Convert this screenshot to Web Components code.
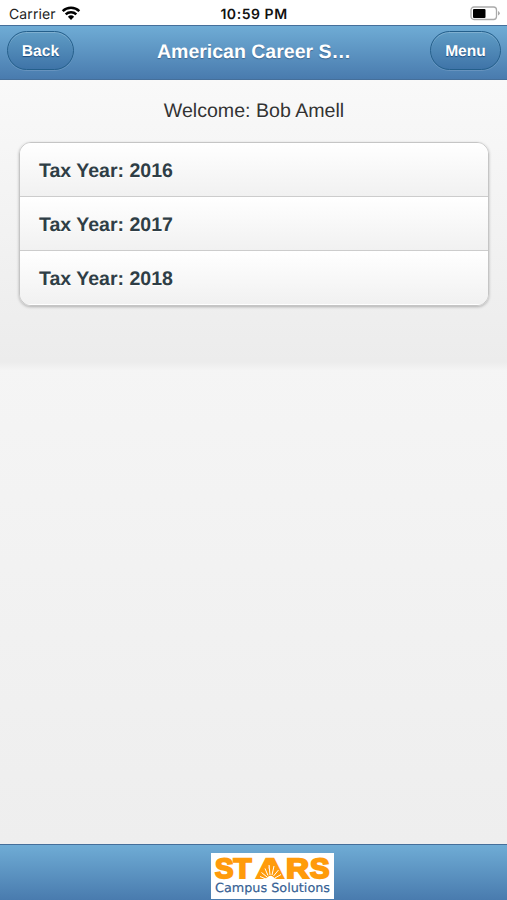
<!DOCTYPE html>
<html lang="en"><head><meta charset="utf-8"><title>Tax Years</title>
<style>html,body{margin:0;height:100%;overflow:hidden}body{font-family:"Liberation Sans",Arial,sans-serif;text-rendering:geometricPrecision}</style></head>
<body>
<app-screen>
  <status-bar slot="status"></status-bar>
  <title-bar slot="header">
    <pill-button slot="left" style="width:67px">Back</pill-button>
    American Career S…
    <pill-button slot="right" style="width:71px">Menu</pill-button>
  </title-bar>
  <welcome-line>Welcome: Bob Amell</welcome-line>
  <year-list>
    <year-row>Tax Year: 2016</year-row>
    <year-row>Tax Year: 2017</year-row>
    <year-row>Tax Year: 2018</year-row>
  </year-list>
  <brand-footer slot="footer"></brand-footer>
</app-screen>
<script>
const define = (name, html) => customElements.define(name, class extends HTMLElement {
  constructor() { super(); this.attachShadow({mode: 'open'}).innerHTML = html; }
});
define('app-screen', `<style>
:host{display:flex;flex-direction:column;height:900px;width:507px;background:#fff}
main{flex:1;background:linear-gradient(#f9f9f9 0,#eee 100%)}
.content{height:290px;box-sizing:border-box;padding:19px 18px 0 19px;background:linear-gradient(#f9f9f9,#ececec 282px,#f4f4f4 290px)}
</style><slot name="status"></slot><slot name="header"></slot><main><div class="content"><slot></slot></div></main><slot name="footer"></slot>`);
define('status-bar', `<style>
:host{display:grid;grid-template-columns:1fr auto 1fr;align-items:center;height:25px;padding:3px 6px 0 9px;box-sizing:border-box;font-family:Inter,"Liberation Sans",sans-serif;font-size:14px;color:#222}
.l{display:flex;align-items:center;gap:5px}.l span{letter-spacing:.1px}.l svg{margin-top:-2px}.t{font-weight:600;color:#111;font-size:14px;letter-spacing:.55px;margin-right:2px}.r{display:flex;justify-content:flex-end;margin-top:-1px}svg{display:block}
</style><div class="l"><span>Carrier</span><svg width="20" height="15" viewBox="0 0 20 15" fill="none" stroke="#000" stroke-width="2.5"><path d="M1.7 5.1C6.3.7 13.7.7 18.3 5.1M4.7 8.3C7.6 5.5 12.4 5.5 15.3 8.3"/><path d="M6.9 10.7Q10 7.9 13.1 10.7L10 14Z" fill="#000" stroke="none"/></svg></div>
<div class="t">10:59 PM</div>
<div class="r"><svg width="31" height="15" viewBox="0 0 31 15"><rect x="1" y="1" width="25.5" height="12.5" rx="3" fill="#fff" stroke="#aaa" stroke-width="1.3"/><rect x="3" y="3" width="12.5" height="9" rx="1" fill="#000"/><path d="M28 5q3.5 2.2 0 4.5z" fill="#aaa"/></svg></div>`);
define('title-bar', `<style>
:host{display:flex;align-items:center;justify-content:space-between;height:55px;box-sizing:border-box;padding:0 6px 4px 7px;border-top:1px solid #456f9a;border-bottom:1px solid #456f9a;background:linear-gradient(#6facd5,#497bae);color:#fff}
h1{margin:2px 0 0 4px;font-size:19.5px;line-height:24px;font-weight:700;text-shadow:0 1px 1px #3e6790;white-space:nowrap}
</style><slot name="left"></slot><h1><slot></slot></h1><slot name="right"></slot>`);
define('pill-button', `<style>
:host{display:flex;align-items:center;justify-content:center;height:39px;box-sizing:border-box;border:1.5px solid #245f8b;border-radius:20px;background:linear-gradient(#5f9cc5,#3f74a8);box-shadow:inset 0 1px 0 #ffffff33,0 1px 0 #ffffff22;color:#fff;font-weight:700;font-size:15.6px;text-shadow:0 1px 1px #194b7e;padding-top:3px}
</style><slot></slot>`);
define('welcome-line', `<style>:host{display:block;text-align:center;font-size:19.6px;line-height:24px;color:#333;text-shadow:0 1px 0 #fff}</style><slot></slot>`);
define('year-list', `<style>:host{display:block;margin-top:19px;height:164px;box-sizing:border-box;border:1px solid #c5c5c5;border-radius:12px;overflow:hidden;box-shadow:0 1px 3px #00000045}</style><slot></slot>`);
define('year-row', `<style>:host{display:flex;align-items:center;height:54px;box-sizing:border-box;padding:4px 19px 0;border-bottom:1px solid #ccc;background:linear-gradient(#fff,#f1f1f1);color:#2f3e46;font-size:19.55px;font-weight:700;text-shadow:0 1px 0 #fff}:host(:last-child){border-bottom-color:transparent}</style><slot></slot>`);
define('brand-footer', `<style>
:host{display:flex;justify-content:center;height:56px;box-sizing:border-box;padding:8px 0 0 37px;border-top:1px solid #456f9a;background:linear-gradient(#6facd5,#497bae)}
svg{display:block}
</style><svg width="123" height="46" viewBox="0 0 123 46"><rect width="123" height="46" fill="#fff"/>
<g fill="#ff9b0b" stroke="#ff9b0b" stroke-width="2" font-family="Liberation Sans,Arial,sans-serif" font-weight="700" font-size="28">
<text x="4" y="24.6" textLength="18.5" lengthAdjust="spacingAndGlyphs">S</text>
<text x="22.5" y="24.6" textLength="18" lengthAdjust="spacingAndGlyphs">T</text>
<text x="45" y="24.6" textLength="28" lengthAdjust="spacingAndGlyphs">A</text>
<text x="75" y="24.6" textLength="23" lengthAdjust="spacingAndGlyphs">R</text>
<text x="99" y="24.6" textLength="19.5" lengthAdjust="spacingAndGlyphs">S</text></g>
<path d="M52 25.6L55 19L59.5 12L64 18L68 25.6Z" fill="#ff9b0b"/>
<path d="M54.5 26.5Q59.5 19 64.5 26.5Z" fill="#fff"/>
<path d="M56 24L50.5 19.5M57 22.5L54 15.5M59 22L58 12M61 22L63 13M62.5 23L67.5 17M64 25L70 21.5M55 26L49 23.5" stroke="#fff" stroke-width="1"/>
<text x="4" y="38.5" font-family="DejaVu Sans,sans-serif" font-size="12.5" fill="#365f94" stroke="#365f94" stroke-width=".2" textLength="115" lengthAdjust="spacingAndGlyphs">Campus Solutions</text></svg>`);
</script></body></html>
